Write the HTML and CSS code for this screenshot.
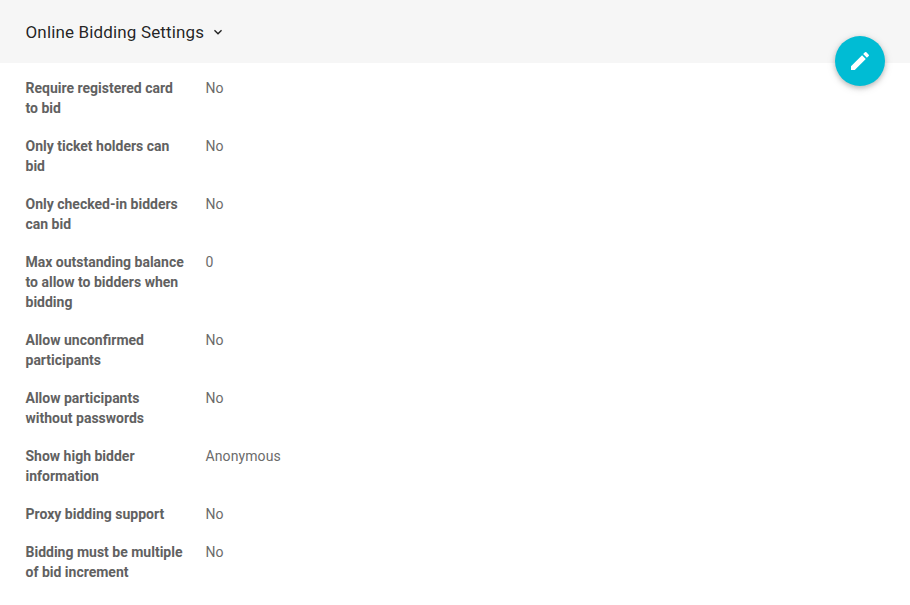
FILE: index.html
```html
<!DOCTYPE html>
<html lang="en">
<head>
<meta charset="utf-8">
<title>Online Bidding Settings</title>
<link rel="stylesheet" href="styles.css">
</head>
<body>
<header class="header">
  <h1 class="title">Online Bidding Settings</h1>
  <svg class="chevron" viewBox="0 0 24 24" width="16" height="16"><path d="M7.41 8.59L12 13.17l4.59-4.58L18 10l-6 6-6-6z"/></svg>
</header>
<button class="fab" aria-label="Edit">
  <svg viewBox="0 0 24 24" width="24" height="24"><path d="M3 17.25V21h3.75L17.81 9.94l-3.75-3.75L3 17.25zM20.71 7.04a1 1 0 0 0 0-1.41l-2.34-2.34a1 1 0 0 0-1.41 0l-1.83 1.83 3.75 3.75 1.83-1.83z"/></svg>
</button>
<main class="list">
  <div class="row"><div class="label">Require registered card to bid</div><div class="value">No</div></div>
  <div class="row"><div class="label">Only ticket holders can bid</div><div class="value">No</div></div>
  <div class="row"><div class="label">Only checked-in bidders can bid</div><div class="value">No</div></div>
  <div class="row"><div class="label">Max outstanding balance to allow to bidders when bidding</div><div class="value">0</div></div>
  <div class="row"><div class="label">Allow unconfirmed participants</div><div class="value">No</div></div>
  <div class="row"><div class="label">Allow participants without passwords</div><div class="value">No</div></div>
  <div class="row"><div class="label">Show high bidder information</div><div class="value">Anonymous</div></div>
  <div class="row"><div class="label">Proxy bidding support</div><div class="value">No</div></div>
  <div class="row"><div class="label">Bidding must be multiple of bid increment</div><div class="value">No</div></div>
</main>
</body>
</html>
```
FILE: styles.css
```css
html, body {
  margin: 0;
  padding: 0;
  background: #fff;
  font-family: Roboto, sans-serif;
  overflow: hidden;
}
.header {
  height: 63px;
  background: #f6f6f6;
  display: flex;
  align-items: center;
  gap: 6px;
  padding-left: 25.5px;
}
.title {
  margin: 0;
  font-size: 17px;
  font-weight: 400;
  letter-spacing: 0.15px;
  color: rgba(0, 0, 0, 0.87);
}
.chevron { fill: #212121; }
.fab {
  position: absolute;
  left: 835px;
  top: 36px;
  width: 50px;
  height: 50px;
  border: 0;
  padding: 0;
  border-radius: 50%;
  background: #00bcd4;
  box-shadow: 0 2px 5px rgba(0, 0, 0, 0.2), 0 2px 10px rgba(0, 0, 0, 0.12);
  display: flex;
  align-items: center;
  justify-content: center;
}
.fab svg { fill: #fff; }
.list {
  padding: 15px 0 0 25.5px;
  display: flex;
  flex-direction: column;
  gap: 18px;
}
.row {
  display: flex;
  font-size: 14px;
  line-height: 20px;
  letter-spacing: 0.1px;
  color: #6b6b6b;
}
.label {
  width: 160px;
  margin-right: 20px;
  font-weight: 700;
  letter-spacing: 0;
  color: #616161;
}
```
